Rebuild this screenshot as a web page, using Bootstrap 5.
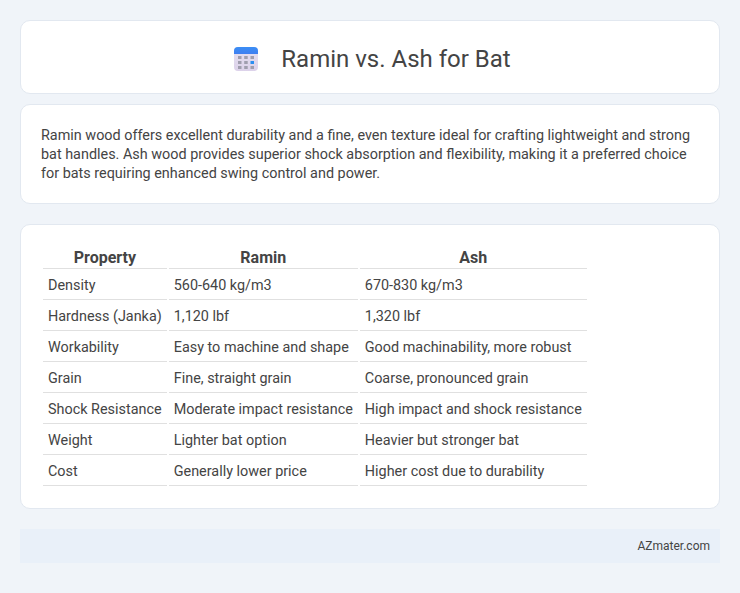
<!DOCTYPE html>
<html lang="en">
<head>
<meta charset="utf-8">
<title>Ramin vs. Ash for Bat</title>
<link href="https://cdn.jsdelivr.net/npm/bootstrap@5.3.0/dist/css/bootstrap.min.css" rel="stylesheet">
<style>
body { background:#f0f4f9; font-family:Roboto,sans-serif; color:#444; padding:20px; }
.panel { background:#fff; border:1px solid #e2e8f0; border-radius:10px; }
.head-panel { padding:4px 0 0 4px; margin-bottom:10px; gap:22px; height:74px; }
.head-panel h1 { font-size:24px; font-weight:400; margin:0; color:#444; line-height:1.2; }
.head-panel svg { margin-top:-1px; }
.intro-panel { padding:21px 20px 20px; margin-bottom:20px; }
.intro-panel p { margin:0; font-size:14.4px; line-height:19px; }
.data-panel { padding:21px 20px 20px; margin-bottom:20px; }
.cmp { border-collapse:separate; border-spacing:2px; font-size:14.4px; color:#444; }
.cmp th { font-size:16px; font-weight:700; text-align:center; padding:0 5px 1px; line-height:19px; border-bottom:1px solid #e0e0e0; }
.cmp td { padding:5px 5px 3px; line-height:20px; border-bottom:1px solid #e0e0e0; white-space:nowrap; }
.foot-bar { background:#e9f0f9; height:34px; padding:0 10px; font-size:12px; color:#444; }
</style>
</head>
<body>
<div class="panel head-panel d-flex align-items-center justify-content-center">
<svg width="26" height="26" viewBox="0 0 26 26"><defs><linearGradient id="tb" x1="0" y1="0" x2="0" y2="1"><stop offset="0" stop-color="#3b8ef5"/><stop offset="1" stop-color="#3f7ff0"/></linearGradient><linearGradient id="bd" x1="0" y1="0" x2="0" y2="1"><stop offset="0" stop-color="#e6e0f0"/><stop offset="1" stop-color="#dcd2ea"/></linearGradient></defs><rect x="1" y="1" width="24" height="24" rx="4" fill="url(#bd)"/><path d="M1 8V5A4 4 0 0 1 5 1h16A4 4 0 0 1 25 5V8z" fill="url(#tb)"/><g fill="#a09eae"><rect x="5" y="10" width="3.500" height="3"/><rect x="11.200" y="10" width="3.500" height="3"/><rect x="17.500" y="10" width="3.500" height="3"/><rect x="5" y="15" width="3.500" height="3"/><rect x="11.200" y="15" width="3.500" height="3"/><rect x="5" y="20" width="3.500" height="3"/><rect x="11.200" y="20" width="3.500" height="3"/><rect x="17.500" y="20" width="3.500" height="3"/></g><rect x="17.500" y="15" width="3.500" height="3" fill="#2b8ff0"/></svg>
<h1>Ramin vs. Ash for Bat</h1>
</div>
<div class="panel intro-panel"><p>Ramin wood offers excellent durability and a fine, even texture ideal for crafting lightweight and strong bat handles. Ash wood provides superior shock absorption and flexibility, making it a preferred choice for bats requiring enhanced swing control and power.</p></div>
<div class="panel data-panel">
<table class="cmp">
<thead><tr><th>Property</th><th>Ramin</th><th>Ash</th></tr></thead>
<tbody>
<tr><td>Density</td><td>560-640 kg/m3</td><td>670-830 kg/m3</td></tr>
<tr><td>Hardness (Janka)</td><td>1,120 lbf</td><td>1,320 lbf</td></tr>
<tr><td>Workability</td><td>Easy to machine and shape</td><td>Good machinability, more robust</td></tr>
<tr><td>Grain</td><td>Fine, straight grain</td><td>Coarse, pronounced grain</td></tr>
<tr><td>Shock Resistance</td><td>Moderate impact resistance</td><td>High impact and shock resistance</td></tr>
<tr><td>Weight</td><td>Lighter bat option</td><td>Heavier but stronger bat</td></tr>
<tr><td>Cost</td><td>Generally lower price</td><td>Higher cost due to durability</td></tr>
</tbody>
</table>
</div>
<div class="foot-bar d-flex align-items-center justify-content-end">AZmater.com</div>
<script src="https://cdn.jsdelivr.net/npm/bootstrap@5.3.0/dist/js/bootstrap.bundle.min.js"></script>
</body>
</html>
